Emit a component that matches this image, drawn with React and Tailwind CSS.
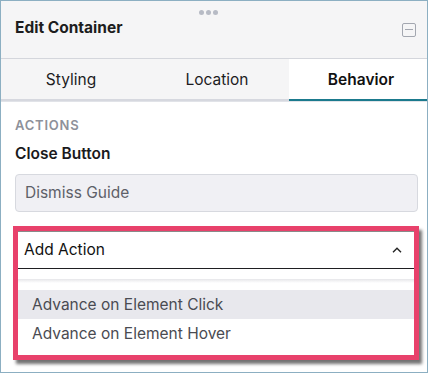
import React from 'react';

function Tab({ label, active, className }) {
  return (
    <div
      className={
        active
          ? 'flex items-center justify-center bg-white font-semibold text-[#111] border-b-2 border-[#1b7a8d] ' + className
          : 'flex items-center justify-center bg-[#f5f5f6] text-[#1c1c1e] border-b-2 border-[#d6d8df] ' + className
      }
    >
      {label}
    </div>
  );
}

export default function App() {
  return (
    <div className="w-[431px] h-[374px] bg-white" style={{ fontFamily: 'Inter, "Noto Sans", sans-serif' }}>
      <div className="w-[428px] h-[373px] border border-[#8cafc2] bg-white flex flex-col overflow-hidden">
        {/* header */}
        <div className="h-[58px] bg-[#f5f5f6] border-b border-[#d4d6dc] relative flex items-center justify-between pl-[14px] pr-[11px]">
          <div className="absolute top-[9px] left-[198px] flex gap-[2px]">
            <span className="w-[5px] h-[5px] rounded-full bg-[#b7bbc5]" />
            <span className="w-[5px] h-[5px] rounded-full bg-[#b7bbc5]" />
            <span className="w-[5px] h-[5px] rounded-full bg-[#b7bbc5]" />
          </div>
          <span className="text-[15.5px] font-bold text-[#1d1d20] mt-[-3px]">Edit Container</span>
          <div className="w-[14px] h-[14px] rounded-[2px] border border-[#a3a7b0] flex items-center justify-center">
            <span className="w-[8px] h-px bg-[#a3a7b0]" />
          </div>
        </div>

        {/* tabs */}
        <div className="flex h-[43px] text-[15.5px] border-b border-[#e1e3e8]">
          <Tab label="Styling" className="w-[144px] pr-[4px] pt-[2px]" />
          <Tab label="Location" className="w-[144px] pt-[2px]" />
          <Tab label="Behavior" active className="flex-1 pl-[6px] pt-[2px]" />
        </div>

        {/* content */}
        <div className="pl-[14px] pr-[9px] pt-[15px]">
          <div className="text-[13px] font-semibold tracking-[0.06em] text-[#8e919a] leading-[16px]">ACTIONS</div>
          <div className="mt-[11px] text-[15.5px] font-semibold text-[#1a1a1d] leading-[20px]">Close Button</div>
          <div className="mt-[10px] h-[38px] rounded-[4px] border border-[#d7d9df] bg-[#f0f0f4] flex items-center px-[9px] text-[15.5px] text-[#5e6068]">
            Dismiss Guide
          </div>
        </div>

        {/* highlighted dropdown */}
        <div className="ml-[12px] mt-[14px] w-[406px] border-[5px] border-[#e8416b] bg-white shadow-[3px_4px_3px_rgba(0,0,0,0.55)]">
          <div className="h-px bg-[#3a3a3a] opacity-60" />
          <div className="h-[37px] flex items-center justify-between pl-[6px] pr-[12px] border-b border-[#1f1f22] text-[15.5px] text-[#111]">
            <span>Add Action</span>
            <svg width="10" height="6" viewBox="0 0 10 6" fill="none">
              <path d="M1 5.2 L5 1.2 L9 5.2" stroke="#222" strokeWidth="1.4" />
            </svg>
          </div>
          <div className="h-[10px]" />
          <div className="h-[4px] bg-gradient-to-b from-[#e6e6e9] to-white" />
          <div className="h-[7px]" />
          <div className="h-[29px] bg-[#e8e8ed] flex items-center pl-[14px] text-[15.5px] text-[#4a4b52]">
            Advance on Element Click
          </div>
          <div className="h-[29px] flex items-center pl-[14px] text-[15.5px] text-[#4a4b52]">
            Advance on Element Hover
          </div>
          <div className="h-[7px]" />
        </div>
      </div>
    </div>
  );
}
